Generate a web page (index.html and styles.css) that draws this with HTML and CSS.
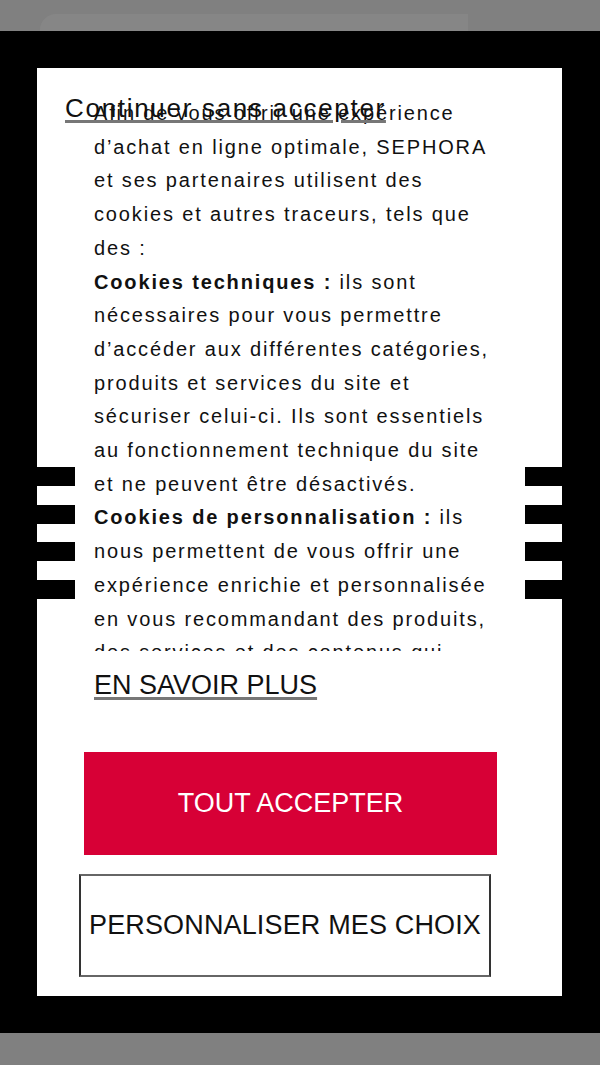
FILE: index.html
```html
<!DOCTYPE html>
<html lang="fr">
<head>
<meta charset="utf-8">
<title>Cookies</title>
<link rel="stylesheet" href="styles.css">
</head>
<body>
<div class="chrome"><div class="tab"></div></div>
<div class="backdrop">
  <div class="card">
    <a class="skip" href="#">Continuer sans accepter</a>
    <div class="scroll">
      <p>Afin de vous offrir une expérience d’achat en ligne optimale, SEPHORA et ses partenaires utilisent des cookies et autres traceurs, tels que des :</p>
      <p><b>Cookies techniques :</b> ils sont nécessaires pour vous permettre d’accéder aux différentes catégories, produits et services du site et sécuriser celui-ci. Ils sont essentiels au fonctionnement technique du site et ne peuvent être désactivés.</p>
      <p><b>Cookies de personnalisation :</b> ils nous permettent de vous offrir une expérience enrichie et personnalisée en vous recommandant des produits, des services et des contenus qui correspondent à vos centres d’intérêt.</p>
    </div>
    <a class="more" href="#">EN SAVOIR PLUS</a>
    <button class="btn accept">TOUT ACCEPTER</button>
    <button class="btn custom">PERSONNALISER MES CHOIX</button>
  </div>
</div>
</body>
</html>
```

FILE: styles.css
```css
html, body {
  margin: 0;
  padding: 0;
  background: #808080;
}
body {
  font-family: "Liberation Sans", Arial, sans-serif;
  width: 600px;
  height: 1065px;
  overflow: hidden;
}
.chrome {
  height: 31px;
  background: #808080;
  display: flex;
  align-items: flex-end;
  padding-left: 40px;
}
.tab {
  width: 428px;
  height: 17px;
  background: #868686;
  border-top-left-radius: 16px;
}
.backdrop {
  background: #000;
  height: 1002px;
  box-sizing: border-box;
  padding: 37px 38px 37px 37px;
}
.card {
  position: relative;
  height: 928px;
  background-color: #fff;
  background-image: repeating-linear-gradient(to bottom, #000 0 19px, #fff 19px 37.7px);
  background-size: 100% 133px;
  background-position: 0 399px;
  background-repeat: no-repeat;
  display: flex;
  flex-direction: column;
  align-items: flex-start;
}
.skip {
  position: absolute;
  left: 28px;
  top: 25px;
  font-size: 26px;
  letter-spacing: 1.7px;
  color: #111;
  text-decoration: underline;
  text-decoration-color: #777;
  text-decoration-thickness: 3px;
  text-underline-offset: 3px;
  line-height: 30px;
}
.scroll {
  margin-left: 38px;
  width: 450px;
  height: 583px;
  box-sizing: border-box;
  padding: 29px 25px 0 19px;
  background: #fff;
  overflow: hidden;
  font-size: 20px;
  letter-spacing: 1.85px;
  line-height: 33.7px;
  color: #111;
}
.scroll p {
  margin: 0;
}
.scroll b {
  font-weight: bold;
}
.more {
  margin: 19px 0 0 57px;
  font-size: 27px;
  line-height: 31px;
  color: #111;
  text-decoration: underline;
  text-decoration-color: #777;
  text-decoration-thickness: 3px;
  text-underline-offset: 3px;
}
.btn {
  font-family: "Liberation Sans", Arial, sans-serif;
  font-size: 27px;
  height: 103px;
  box-sizing: border-box;
  cursor: pointer;
  padding: 0;
}
.accept {
  margin: 51px 0 0 47px;
  width: 413px;
  background: #d70036;
  color: #fff;
  border: none;
}
.custom {
  margin: 19px 0 0 42px;
  width: 412px;
  background: #fff;
  color: #111;
  letter-spacing: 0.15px;
  border: 2px solid #333;
  border-top-color: #666;
  border-bottom-color: #666;
}
```
